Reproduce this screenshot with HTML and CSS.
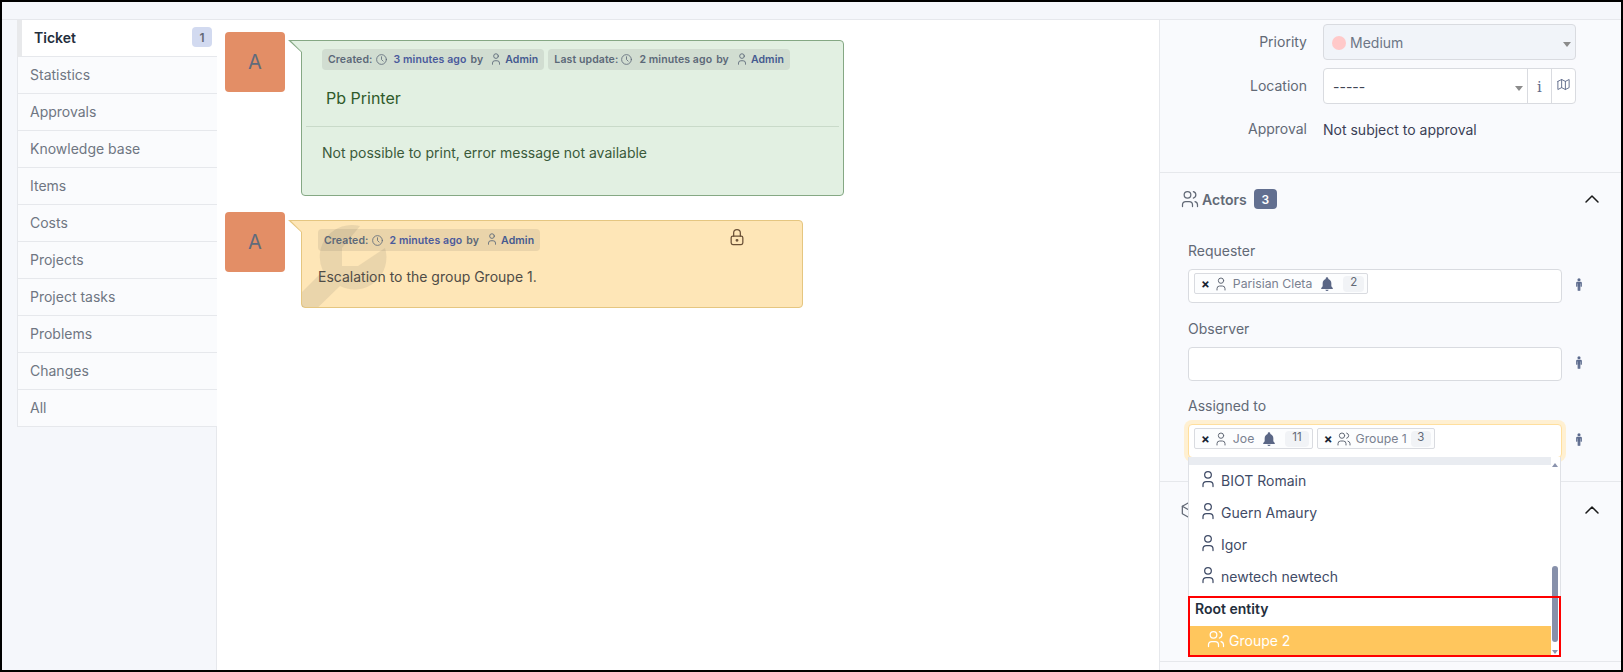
FILE: index.html
```html
<!DOCTYPE html>
<html lang="en">
<head>
<meta charset="utf-8">
<title>Ticket</title>
<link rel="stylesheet" href="styles.css">
</head>
<body>
<svg class="defs" width="0" height="0" aria-hidden="true">
  <symbol id="user" viewBox="0 0 24 24"><circle cx="12" cy="7" r="4"/><path d="M6 21v-2a4 4 0 0 1 4-4h4a4 4 0 0 1 4 4v2"/></symbol>
  <symbol id="users" viewBox="0 0 24 24"><circle cx="9" cy="7" r="4"/><path d="M3 21v-2a4 4 0 0 1 4-4h4a4 4 0 0 1 4 4v2"/><path d="M16 3.130a4 4 0 0 1 0 7.750"/><path d="M21 21v-2a4 4 0 0 0-3-3.850"/></symbol>
  <symbol id="clock" viewBox="0 0 24 24"><circle cx="12" cy="12" r="9"/><path d="M12 7v5l3 3"/></symbol>
  <symbol id="bell" viewBox="0 0 24 24"><path class="solid" d="M12 2a2 2 0 0 0-2 2v.6A7 7 0 0 0 5.500 11v4.200L3.400 18a1 1 0 0 0 .8 1.600h15.600a1 1 0 0 0 .8-1.600l-2.100-2.800V11A7 7 0 0 0 14 4.600V4a2 2 0 0 0-2-2zM9.500 20.800a2.600 2.600 0 0 0 5 0z"/></symbol>
  <symbol id="person" viewBox="0 0 12 20"><circle class="solid" cx="6" cy="2.600" r="2.400"/><path class="solid" d="M3.400 5.800h5.200A1.800 1.800 0 0 1 10.400 7.600v5a.9.9 0 0 1-1.800 0V8.500h-.5V19a1 1 0 0 1-2 0v-5.800h-.2V19a1 1 0 0 1-2 0V8.500h-.5v4.100a.9.9 0 0 1-1.800 0v-5a1.800 1.800 0 0 1 1.800-1.800z"/></symbol>
</svg>

<div class="frame">
  <div class="topbar"></div>
  <div class="content">
    <nav class="nav">
      <ul class="tabs">
        <li class="tab active"><span>Ticket</span><span class="tab-count">1</span></li>
        <li class="tab">Statistics</li>
        <li class="tab">Approvals</li>
        <li class="tab">Knowledge base</li>
        <li class="tab">Items</li>
        <li class="tab">Costs</li>
        <li class="tab">Projects</li>
        <li class="tab">Project tasks</li>
        <li class="tab">Problems</li>
        <li class="tab">Changes</li>
        <li class="tab">All</li>
      </ul>
    </nav>

    <main class="timeline">
      <article class="entry">
        <div class="avatar">A</div>
        <div class="bubble bubble-green">
          <div class="metas">
            <span class="meta"><span>Created:</span><svg class="ico meta-clock"><use href="#clock"/></svg><b>3 minutes ago</b><span class="by">by</span><svg class="ico meta-user"><use href="#user"/></svg><a>Admin</a></span>
            <span class="meta"><span>Last update:</span><svg class="ico meta-clock"><use href="#clock"/></svg><span class="plain">2 minutes ago</span><span class="by">by</span><svg class="ico meta-user"><use href="#user"/></svg><a>Admin</a></span>
          </div>
          <h2 class="bubble-title">Pb Printer</h2>
          <hr class="bubble-rule">
          <p class="bubble-text">Not possible to print, error message not available</p>
        </div>
      </article>

      <article class="entry">
        <div class="avatar">A</div>
        <div class="bubble bubble-yellow">
          <div class="watermark">
            <svg viewBox="302 221 120 90" width="120" height="90"><path d="M360 226A32 32 0 0 0 323 271L290 304L303 322L340 286A32 32 0 0 0 385 248L358 266H342V248Z"/></svg>
          </div>
          <div class="metas">
            <span class="meta"><span>Created:</span><svg class="ico meta-clock"><use href="#clock"/></svg><b>2 minutes ago</b><span class="by">by</span><svg class="ico meta-user"><use href="#user"/></svg><a>Admin</a></span>
            <svg class="lock" viewBox="0 0 24 24"><rect x="5" y="11" width="14" height="10" rx="2"/><circle cx="12" cy="16" r="1"/><path d="M8 11V7a4 4 0 0 1 8 0v4"/></svg>
          </div>
          <p class="bubble-text">Escalation to the group Groupe 1.</p>
        </div>
      </article>
    </main>

    <aside class="side">
      <section class="fields">
        <div class="row">
          <label class="row-label">Priority</label>
          <div class="select select-disabled"><span class="dot"></span><span class="select-value">Medium</span><span class="caret"></span></div>
        </div>
        <div class="row">
          <label class="row-label">Location</label>
          <div class="input-group">
            <div class="select select-grow"><span class="select-value dark">-----</span><span class="caret"></span></div>
            <span class="addon addon-i">i</span>
            <span class="addon addon-map"><svg class="ico ico14" viewBox="0 0 24 24"><path d="M3 7l6-3 6 3 6-3v13l-6 3-6-3-6 3V7"/><path d="M9 4v13"/><path d="M15 7v13"/></svg></span>
          </div>
        </div>
        <div class="row row-text">
          <label class="row-label">Approval</label>
          <span class="row-value">Not subject to approval</span>
        </div>
      </section>

      <section class="accordion">
        <header class="acc-head">
          <svg class="ico ico20"><use href="#users"/></svg>
          <span class="acc-title">Actors</span>
          <span class="acc-badge">3</span>
          <svg class="chev" viewBox="0 0 24 24"><path d="M6 15l6-6 6 6"/></svg>
        </header>
        <div class="actors">
          <div class="actor">
            <label class="actor-label">Requester</label>
            <div class="actor-row">
              <div class="tagbox">
                <span class="tag"><span class="x">×</span><svg class="ico ico16"><use href="#user"/></svg><span class="tag-name">Parisian Cleta</span><svg class="bell"><use href="#bell"/></svg><span class="num">2</span></span>
              </div>
              <svg class="person"><use href="#person"/></svg>
            </div>
          </div>
          <div class="actor">
            <label class="actor-label">Observer</label>
            <div class="actor-row">
              <div class="tagbox"></div>
              <svg class="person"><use href="#person"/></svg>
            </div>
          </div>
          <div class="actor">
            <label class="actor-label">Assigned to</label>
            <div class="actor-row">
              <div class="tagbox tagbox-focus">
                <span class="tag"><span class="x">×</span><svg class="ico ico16"><use href="#user"/></svg><span class="tag-name">Joe</span><svg class="bell"><use href="#bell"/></svg><span class="num">11</span></span>
                <span class="tag"><span class="x">×</span><svg class="ico ico16"><use href="#users"/></svg><span class="tag-name tight">Groupe 1</span><span class="num num-tight">3</span></span>
              </div>
              <svg class="person"><use href="#person"/></svg>
            </div>
          </div>
        </div>
      </section>

      <section class="accordion acc-next">
        <header class="acc-head acc-head-next">
          <svg class="ico ico20" viewBox="0 0 24 24"><path d="M12 3l8 4.500v9L12 21l-8-4.500v-9z"/><path d="M12 12l8-4.500M12 12v9M12 12L4 7.500"/></svg>
          <svg class="chev" viewBox="0 0 24 24"><path d="M6 15l6-6 6 6"/></svg>
        </header>
      </section>
      <div class="last-rule"></div>

      <div class="dropdown">
        <div class="dd-list">
          <div class="dd-scrolled"></div>
          <div class="dd-item"><svg class="ico ico20"><use href="#user"/></svg>BIOT Romain</div>
          <div class="dd-item"><svg class="ico ico20"><use href="#user"/></svg>Guern Amaury</div>
          <div class="dd-item"><svg class="ico ico20"><use href="#user"/></svg>Igor</div>
          <div class="dd-item"><svg class="ico ico20"><use href="#user"/></svg>newtech newtech</div>
          <div class="dd-group">Root entity</div>
          <div class="dd-item dd-selected"><svg class="ico ico20"><use href="#users"/></svg>Groupe 2</div>
        </div>
        <div class="dd-scrollbar">
          <span class="arrow-up"></span>
          <span class="thumb"></span>
          <span class="arrow-down"></span>
        </div>
        <div class="callout"></div>
      </div>
    </aside>
  </div>
</div>
</body>
</html>
```
FILE: styles.css
```css
* { box-sizing: border-box; }
html, body { margin: 0; padding: 0; }
body { font-family: Inter, "Noto Sans", sans-serif; font-size: 14px; color: #626976; background: #000; }
.defs { position: absolute; }
ul { list-style: none; margin: 0; padding: 0; }
h2, p { margin: 0; font-weight: 400; }

.frame { width: 1623px; height: 672px; border: 2px solid #000; background: #f5f7fb; display: flex; flex-direction: column; overflow: hidden; }
.topbar { height: 18px; flex: none; border-bottom: 1px solid #e6e8ec; }
.content { flex: 1; display: flex; min-height: 0; }

.ico { fill: none; stroke: currentColor; stroke-width: 1.5; stroke-linecap: round; stroke-linejoin: round; flex: none; }
.ico14 { width: 14px; height: 14px; }
.ico16 { width: 16px; height: 16px; }
.ico20 { width: 20px; height: 20px; }
.solid { fill: currentColor; stroke: none; }

/* left tabs */
.nav { width: 215px; flex: none; padding-left: 15px; border-right: 1px solid #e6e8ec; }
.tab { height: 37px; display: flex; align-items: center; padding: 0 0 2px 12px; border-left: 1px solid #e6e8ec; border-bottom: 1px solid #e6e8ec; background: #fafbfd; color: #6f7682; font-size: 14px; margin-right: -1px; }
.tab.active { justify-content: space-between; padding: 0 5px 2px 12px; border-left: 5px solid #e8e9eb; background: #fff; color: #232e3c; font-weight: 600; }
.tab-count { width: 20px; height: 20px; border-radius: 4px; background: #d2daf0; color: #626976; font-size: 12px; display: flex; align-items: center; justify-content: center; }

/* timeline */
.timeline { flex: 1; background: #fff; padding: 12px 8px; min-width: 0; }
.entry { display: flex; gap: 16px; margin-bottom: 16px; align-items: flex-start; }
.avatar { width: 60px; height: 60px; flex: none; border-radius: 4px; background: #e38e66; color: #5f6b7c; font-size: 20px; display: flex; align-items: center; justify-content: center; }
.bubble { position: relative; margin-top: 8px; border: 1px solid; border-radius: 4px; border-top-left-radius: 0; }
.bubble::before { content: ""; position: absolute; left: -14px; top: -1px; border-style: solid; border-width: 13px 0 0 14px; border-color: transparent; }
.bubble::after { content: ""; position: absolute; left: -11px; top: 0; border-style: solid; border-width: 11px 0 0 11px; border-color: transparent; }
.bubble-green { width: 543px; height: 156px; background: #e2f0e2; border-color: #85a884; color: #3a5a3a; padding: 8px 4px; }
.bubble-green::before { border-top-color: #85a884; }
.bubble-green::after { border-top-color: #e2f0e2; }
.bubble-yellow { width: 502px; height: 88px; background: #fee6b7; border-color: #e5c680; color: #4f4c46; padding: 8px 16px; }
.bubble-yellow::before { border-top-color: #e5c680; }
.bubble-yellow::after { border-top-color: #fee6b7; }
.watermark { position: absolute; inset: 0; overflow: hidden; pointer-events: none; }
.watermark svg { display: block; fill: rgba(90, 90, 90, 0.12); }

.metas { position: relative; display: flex; gap: 4px; height: 22px; }
.bubble-green .metas { padding-left: 16px; }
.meta { display: inline-flex; align-items: center; height: 21px; padding: 0 6px; border-radius: 4px; background: rgba(60, 60, 60, 0.1); color: #5c6878; font-size: 10.500px; font-weight: 600; white-space: nowrap; letter-spacing: .1px; }
.bubble-yellow .meta { height: 22px; }
.meta-clock { width: 13px; height: 13px; margin: 0 6px 0 2px; }
.meta-user { width: 14px; height: 14px; margin: -2px 2px 0 6px; }
.meta b { font-weight: 600; color: #4a5a9c; }
.plain { font-weight: 600; }
.by { margin-left: 4px; }
.meta a { color: #44598f; }
.lock { position: absolute; left: 409px; top: -2px; width: 20px; height: 20px; fill: none; stroke: #6a5036; stroke-width: 1.500; stroke-linejoin: round; stroke-linecap: round; }
.bubble-title { font-size: 16px; line-height: 24px; margin: 15px 0 0 20px; color: #2f5a2a; }
.bubble-rule { border: 0; border-top: 1px solid #c9dac9; margin: 16px 0 0; }
.bubble-text { font-size: 14px; line-height: 20px; margin-top: 16px; }
.bubble-green .bubble-text { margin-left: 16px; }
.bubble-yellow .bubble-text { position: relative; margin-top: 16px; }

/* right panel */
.side { position: relative; width: 462px; flex: none; background: #f9fafd; border-left: 1px solid #e6e8ec; }
.fields { height: 153px; padding-top: 4px; border-bottom: 1px solid #e6e8ec; display: flex; flex-direction: column; gap: 8px; }
.row { display: flex; align-items: center; height: 36px; }
.row-label { width: 147px; text-align: right; margin-right: 16px; flex: none; margin-top: -1px; }
.row-text { height: 34px; }
.row-value { color: #3b3f56; }
.select { width: 253px; height: 36px; display: flex; align-items: center; padding: 1px 9px 0; border: 1px solid #d9dbe0; border-radius: 4px; background: #fff; position: relative; }
.select-disabled { background: #f1f4f9; padding-left: 8px; }
.select-grow { flex: 1; width: auto; height: 100%; border: 0; background: transparent; }
.dot { width: 14px; height: 14px; border-radius: 50%; background: #ffc9c9; margin-right: 4px; }
.select-value { color: #6d7686; }
.select-value.dark { color: #3f4553; }
.caret { position: absolute; right: 4px; top: 17px; border-style: solid; border-width: 5px 4px 0; border-color: #8b8b8b transparent transparent; }
.input-group { width: 253px; height: 36px; display: flex; border: 1px solid #d9dbe0; border-radius: 4px; background: #fff; }
.addon { width: 24px; flex: none; border-left: 1px solid #d9dbe0; display: flex; justify-content: center; color: #5f6b8a; }
.addon-i { font-family: "DejaVu Serif", serif; font-size: 15px; align-items: center; padding-top: 2px; }
.addon-map { padding-top: 8px; }
.addon-map .ico14 { width: 15px; height: 15px; }

.acc-head { display: flex; align-items: center; height: 52px; padding: 0 17px 0 20px; color: #626976; }
.acc-title { margin-left: 2px; font-weight: 600; font-size: 14px; }
.acc-badge { margin-left: 7px; background: #626f90; color: #fff; font-size: 12px; font-weight: 600; width: 23px; height: 20px; border-radius: 4px; display: flex; align-items: center; justify-content: center; }
.chev { width: 24px; height: 24px; margin-left: auto; fill: none; stroke: #1a1a1a; stroke-width: 1.500; stroke-linecap: round; stroke-linejoin: round; }
.actors { padding: 16px 12px 0 28px; display: flex; flex-direction: column; gap: 15.500px; }
.actor-label { display: block; height: 20px; line-height: 20px; color: #626976; }
.actor-row { display: flex; align-items: center; margin-top: 8px; }
.tagbox { width: 374px; height: 34px; display: flex; gap: 4px; padding: 3px 5px; border: 1px solid #d9dbe0; border-radius: 4px; background: #fff; flex: none; }
.tagbox-focus { border-color: #ffdf9e; box-shadow: 0 0 0 4px #fff0d2; }
.tag { height: 21px; display: inline-flex; align-items: center; padding-left: 6px; padding-right: 3px; border: 1px solid #d9dbe0; border-radius: 2px; background: #fcfdfe; color: #7a8190; font-size: 12.250px; }
.tag .ico { color: #626976; }
.x { color: #182433; font-weight: 700; margin-right: 3px; font-size: 13px; }
.tag-name { margin-left: 4px; }
.bell { width: 16px; height: 16px; margin-left: 7px; color: #5a6685; flex: none; }
.num { min-width: 20px; height: 16px; line-height: 13px; margin-left: 8px; padding: 0 7px; border-radius: 4px; background: #f1f3f6; color: #626976; font-size: 11.500px; text-align: center; }
.num-tight { margin-left: 4px; padding: 0 6px; }
.person { width: 8px; height: 13px; margin: -3px 0 0 13px; color: #5c6a8d; }
.acc-next { margin-top: 23px; border-top: 1px solid #e6e8ec; height: 180px; }
.acc-head-next { padding-top: 3px; padding-left: 19px; }
.last-rule { border-top: 1px solid #e6e8ec; }

/* dropdown overlay */
.dropdown { position: absolute; left: 28px; top: 437px; width: 373px; height: 200px; display: flex; background: #fff; border: 1px solid #dfe1e6; border-top: 0; }
.dd-list { flex: 1; min-width: 0; }
.dd-scrolled { height: 8px; background: #e9ecf1; }
.dd-item { height: 32px; display: flex; align-items: center; gap: 3px; padding: 0 0 2px 9px; color: #3f4b66; font-size: 14px; }
.dd-item .ico { margin-top: -3px; }
.dd-group { height: 33px; padding: 7px 6px 0; font-weight: 600; font-size: 14px; color: #232e3c; }
.dd-selected { height: 31px; background: #ffc65d; color: #fff; padding-left: 16px; margin-left: 1px; }
.dd-scrollbar { width: 9px; flex: none; position: relative; background: #fff; }
.arrow-up, .arrow-down { position: absolute; left: 1px; border-style: solid; border-color: transparent; }
.arrow-up { top: 6px; border-width: 0 3.500px 4px; border-bottom-color: #8a93ad; }
.arrow-down { bottom: 2px; border-width: 4px 3.500px 0; border-top-color: #8a93ad; }
.thumb { position: absolute; left: 1px; top: 109px; width: 6px; height: 76px; border-radius: 3px; background: #8790aa; }
.callout { position: absolute; left: -1px; top: 139px; width: 373px; height: 61px; border: 2px solid #f00; pointer-events: none; }
```
